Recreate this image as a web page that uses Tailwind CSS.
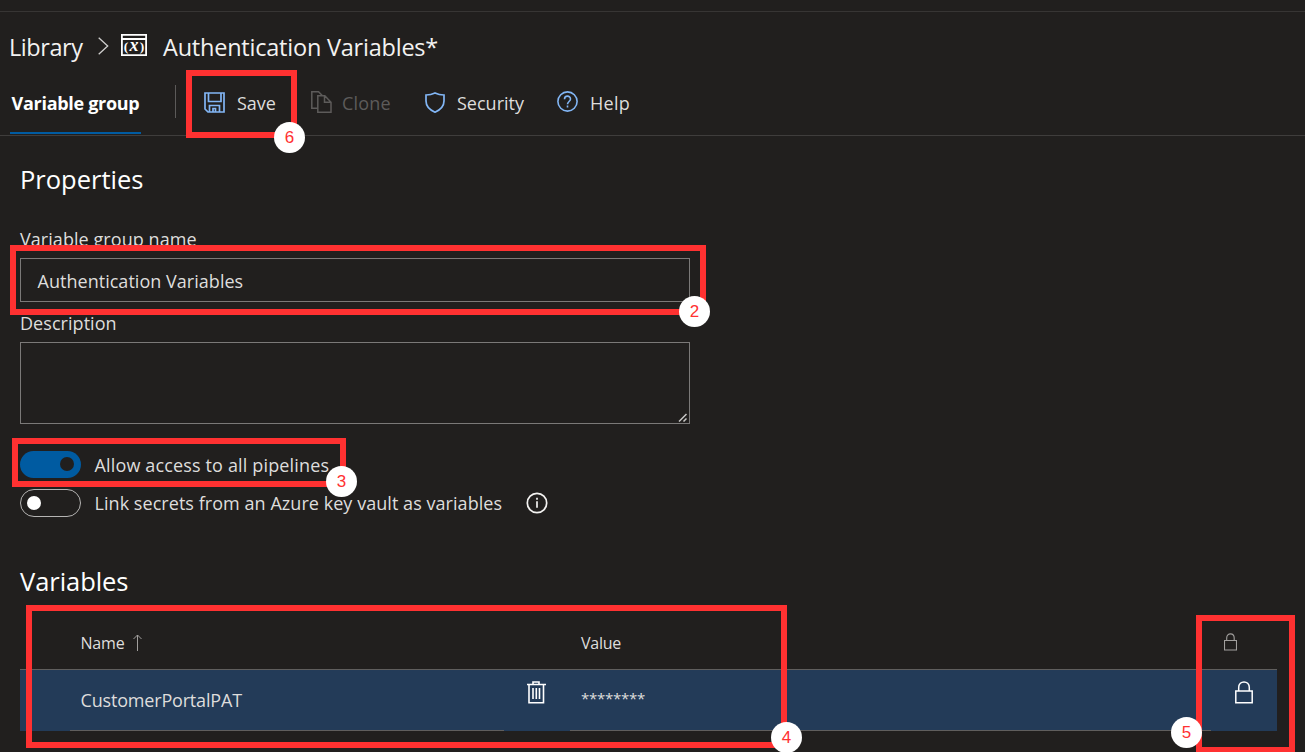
<!DOCTYPE html>
<html lang="en">
<head>
<meta charset="utf-8">
<title>Authentication Variables</title>
<script src="https://cdn.jsdelivr.net/npm/@tailwindcss/browser@4"></script>
</head>
<body class="bg-[#211f1e]">
<div class="relative flex h-[752px] w-[1305px] flex-col overflow-hidden bg-[#211f1e] font-['Open_Sans',sans-serif] text-[18px] whitespace-nowrap text-[#dedddc]">
  <div class="h-3 shrink-0 border-b border-[#373534]"></div>

  <header class="flex h-[70px] shrink-0 items-center pt-[2px] pl-[9px] text-[23.5px] text-[#f3f2f1]">
    <span class="w-[74px] tracking-[-0.45px]">Library</span>
    <svg class="mb-[4px] ml-[15px] h-[18px] w-[11px]" viewBox="0 0 11 18" fill="none" stroke="#d0cfce" stroke-width="1.3"><path d="M.7.7 9.7 9 .7 17.3"/></svg>
    <svg class="mb-[6px] ml-3 h-[22px] w-[26px]" viewBox="0 0 26 22"><path fill="none" stroke="#fff" stroke-width="1.8" d="M.9.9h24.2v20.200H.9zM1 5h24"/><g font-family="Liberation Serif" font-weight="700" fill="#fff" text-anchor="middle"><text x="5" y="16.500" font-size="13.5">(</text><text x="13" y="16.500" font-size="18" font-style="italic">x</text><text x="21" y="16.500" font-size="13.5">)</text></g></svg>
    <span class="ml-[16px] tracking-[-0.22px]">Authentication Variables*</span>
  </header>

  <nav class="flex h-[54px] shrink-0 border-b border-[#3f3d3c]">
    <div class="ml-[10px] flex h-[52px] w-[131px] items-start justify-center border-b-2 border-[#005ba1] pt-2 font-bold tracking-[-0.3px] text-white">Variable group</div>
    <div class="mt-[3px] ml-[34px] h-[33px] w-px bg-[#5c5a59]"></div>
    <div class="ml-[28px] flex h-[43px] items-center">
      <svg class="mb-[2px] h-[21px] w-[21px]" viewBox="0 0 21 21" fill="none" stroke="#82b6f5" stroke-width="1.7"><path d="M1 1h19v19H4l-3-3zM4.500 1v8.500h12.500V1M5.500 20v-6.500h10V20M9 20v-3.500h2.500V20"/></svg>
      <span class="ml-[12px] w-[39px]">Save</span>
    </div>
    <div class="ml-[35px] flex h-[43px] items-center text-[#5d5b5a]">
      <svg class="mb-[3px] h-[22px] w-[21px]" viewBox="0 0 21 22" fill="none" stroke="#5d5b5a" stroke-width="1.5"><path d="M6.500 17.300H.8V.8h6.700l4 4M6.800 4.800h7l6.200 6.500v10H6.800zM13.500 4.800v6.500H20"/></svg>
      <span class="ml-[10px] w-[49px] tracking-[0.2px]">Clone</span>
    </div>
    <div class="ml-[34px] flex h-[43px] items-center">
      <svg class="mb-[2px] h-[21px] w-[20px]" viewBox="0 0 20 21" fill="none" stroke="#82b6f5" stroke-width="1.700"><path d="M10 1C7 2.500 4 3 1 3v6c0 5 4 9 9 11.200C15 18 19 14 19 9V3c-3 0-6-.5-9-2z"/></svg>
      <span class="ml-[12px] w-[67px]">Security</span>
    </div>
    <div class="ml-[33px] flex h-[43px] items-center">
      <svg class="mb-[4px] h-[21px] w-[21px]" viewBox="0 0 21 21" fill="none" stroke="#82b6f5" stroke-width="1.600"><circle cx="10.500" cy="10.500" r="9.600"/><path d="M7.500 8.200c0-4 6-4 6-.3 0 2.600-3 2.600-3 5.400M10.500 14.600v1.900"/></svg>
      <span class="ml-[12px] tracking-[0.25px]">Help</span>
    </div>
  </nav>

  <main class="flex flex-col pl-5">
    <h2 class="mt-[25px] h-9 text-[25.5px] leading-9 text-white">Properties</h2>
    <div class="mt-[30px] h-6 leading-6 tracking-[0.06px]">Variable group name</div>
    <div class="mt-[7px] flex h-11 w-[670px] items-center border border-[#7b7978] pt-[2px] pl-[16.5px] tracking-[0.03px]">Authentication Variables</div>
    <div class="mt-[9px] h-6 leading-6 tracking-[0.05px]">Description</div>
    <div class="mt-[7px] flex h-[82px] w-[670px] items-end justify-end border border-[#7b7978] px-[2px] pb-px">
      <svg class="h-[9px] w-[9px]" viewBox="0 0 9 9" stroke="#c9c8c7" stroke-width="1.5"><path d="M1 8.500 8.500 1M5.500 8.500l3-3"/></svg>
    </div>
    <div class="mt-[27px] flex h-7 items-center">
      <div class="mb-px flex h-[27px] w-[61px] items-center justify-end rounded-full bg-[#005ba1] pr-[7px]"><div class="mb-px h-[14px] w-[14px] rounded-full bg-[#211f1e]"></div></div>
      <span class="ml-[13.5px] tracking-[0.15px]">Allow access to all pipelines</span>
    </div>
    <div class="mt-[10px] flex h-7 items-center">
      <div class="flex h-7 w-[61px] items-center rounded-full border border-[#b5b4b3] pl-[6px]"><div class="h-[14px] w-[14px] rounded-full bg-white"></div></div>
      <span class="ml-[13.5px] tracking-[0.05px]">Link secrets from an Azure key vault as variables</span>
      <svg class="ml-6 h-[22px] w-[22px]" viewBox="0 0 22 22" fill="none" stroke="#f3f2f1" stroke-width="1.700"><circle cx="11" cy="11" r="9.700"/><path d="M11 9.200v6.600M11 5.800v1.900"/></svg>
    </div>
    <h2 class="mt-[46px] h-9 text-[25.5px] leading-9 tracking-[-0.05px] text-white">Variables</h2>
    <div class="flex h-[71px] w-[1257px] items-center border-b border-[#605e5d] pt-[17px] text-[16px]">
      <div class="flex w-[561px] items-center pl-[60.5px] tracking-[-0.2px]">Name<svg class="ml-[9px] h-[17px] w-[9px]" viewBox="0 0 9 17" fill="none" stroke="#a19f9d"><path d="M4.500 17V1M.5 5l4-4 4 4"/></svg></div>
      <span class="tracking-[-0.25px]">Value</span>
      <svg class="mr-[40px] mb-px ml-auto h-[18px] w-[13px]" viewBox="0 0 13 18" fill="none" stroke="#a19f9d" stroke-width="1.100"><path d="M.5 7.500h12v9.500H.5zM2.700 7.500V5c0-5.500 7.500-5.500 7.500 0v2.500"/></svg>
    </div>
    <div class="flex h-[61px] w-[1257px] bg-[#233b58]">
      <div class="w-[50px]"></div>
      <div class="flex w-[434px] items-center border-b border-[#605e5d] pl-[10.5px] tracking-[-0.18px]">CustomerPortalPAT</div>
      <div class="flex w-[66px] pt-[11px] pl-[23px]"><svg class="h-[23px] w-[19px]" viewBox="0 0 19 23" fill="none" stroke="#fff" stroke-width="1.600"><path d="M0 3.500h19M6 3.500V1h6v2.500M2 3.500v18.300h14.500V3.500M6 7v11M9.300 7v11M12.500 7v11"/></svg></div>
      <div class="flex w-[641px] items-center border-b border-[#605e5d] pb-[3px] pl-[11px] text-[15px] tracking-[-0.25px]">********</div>
      <div class="pt-[11px] pl-[24px]"><svg class="h-[23px] w-[18px]" viewBox="0 0 18 23" fill="none" stroke="#fff" stroke-width="1.500"><path d="M.8 10h16.400v11.700H.8zM3.700 10V6.500c0-7.500 10.600-7.500 10.600 0V10"/></svg></div>
    </div>
  </main>

  <div class="pointer-events-none absolute inset-0 font-['Liberation_Sans',sans-serif] text-[17px] text-[#ff3131]">
    <div class="absolute top-[70px] left-[186px] h-[68px] w-[111px] border-6 border-[#ff3131]"></div>
    <div class="absolute top-[245px] left-[10px] h-[70px] w-[696px] border-6 border-[#ff3131]"></div>
    <div class="absolute top-[438px] left-[12px] h-[49px] w-[334px] border-6 border-[#ff3131]"></div>
    <div class="absolute top-[605px] left-[26px] h-[143px] w-[761px] border-6 border-[#ff3131]"></div>
    <div class="absolute top-[615px] left-[1196px] h-[138px] w-[99px] border-6 border-[#ff3131]"></div>
    <div class="absolute top-[122px] left-[274px] flex size-[31px] items-center justify-center rounded-full bg-white">6</div>
    <div class="absolute top-[296px] left-[679px] flex size-[31px] items-center justify-center rounded-full bg-white">2</div>
    <div class="absolute top-[466px] left-[326px] flex size-[31px] items-center justify-center rounded-full bg-white">3</div>
    <div class="absolute top-[722px] left-[771px] flex size-[31px] items-center justify-center rounded-full bg-white">4</div>
    <div class="absolute top-[717px] left-[1171px] flex size-[31px] items-center justify-center rounded-full bg-white">5</div>
  </div>
</div>
</body>
</html>
